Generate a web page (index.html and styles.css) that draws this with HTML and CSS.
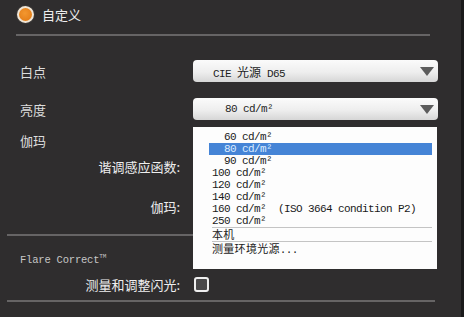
FILE: index.html
```html
<!DOCTYPE html>
<html lang="zh-CN">
<head>
    <meta charset="UTF-8">
    <meta name="viewport" content="width=device-width, initial-scale=1.0">
    <title>白点与亮度</title>
    <link rel="stylesheet" href="styles.css">
</head>
<body>
    <div class="panel">
        <div class="head">
            <span class="radio"></span>
            <span class="head-text">自定义</span>
        </div>
        <div class="rule rule-top"></div>

        <div class="row row-white">
            <span class="lbl">白点</span>
            <div class="select">
                <span class="val">CIE <span class="cjk">光源</span> D65</span>
                <span class="arrow"></span>
            </div>
        </div>

        <div class="row row-lum">
            <span class="lbl">亮度</span>
            <div class="select-wrap">
                <div class="select">
                    <span class="val">  80 cd/m²</span>
                    <span class="arrow"></span>
                </div>
                <!-- liste ouverte -->
                <ul class="menu">
                    <li>  60 cd/m²</li>
                    <li class="active">  80 cd/m²</li>
                    <li>  90 cd/m²</li>
                    <li>100 cd/m²</li>
                    <li>120 cd/m²</li>
                    <li>140 cd/m²</li>
                    <li>160 cd/m²  (ISO 3664 condition P2)</li>
                    <li>250 cd/m²</li>
                    <li class="sep"></li>
                    <li class="cjk-item">本机</li>
                    <li class="sep"></li>
                    <li class="cjk-item">测量环境光源<span class="dots">...</span></li>
                </ul>
            </div>
        </div>

        <div class="row row-gamma">
            <span class="lbl">伽玛</span>
        </div>
        <div class="row row-trc">
            <span class="lbl sub">谐调感应函数:</span>
        </div>
        <div class="row row-gval">
            <span class="lbl sub">伽玛:</span>
        </div>

        <div class="rule rule-wide rule-mid"></div>

        <div class="row row-flare">
            <span class="flare">Flare Correct<sup>TM</sup></span>
        </div>
        <div class="row row-check">
            <span class="lbl sub">测量和调整闪光:</span>
            <span class="checkbox"></span>
        </div>

        <div class="rule rule-wide rule-bottom"></div>
    </div>
</body>
</html>
```

FILE: styles.css
```css
body {
    margin: 0;
    background-color: #2f2d2e;
    font-family: "Noto Sans CJK SC", "Liberation Sans", sans-serif;
    font-size: 13px;
    color: #e2e2e2;
}
.panel {
    width: 461px;
    height: 317px;
    border-right: 3px solid #1b1a1b;
    overflow: hidden;
}
.head {
    height: 28px;
    display: flex;
    align-items: center;
    padding-left: 17px;
}
.radio {
    width: 13px;
    height: 13px;
    border-radius: 50%;
    border: 2px solid #f1e6d6;
    background: radial-gradient(circle at 45% 40%, #f3972f, #e07712);
    box-shadow: 0 0 0 1px #3a3838;
}
.head-text {
    margin-left: 8px;
    font-size: 13px;
    color: #eeeeee;
}
.rule {
    height: 2px;
    background-color: #666465;
}
.rule-top {
    margin: 6px 0 0 16px;
    width: 414px;
}
.rule-wide {
    margin-left: 7px;
    width: 428px;
}
.rule-mid { margin-top: 18px; }
.rule-bottom { margin-top: 6px; }

.row {
    display: flex;
    align-items: center;
}
.lbl {
    width: 160px;
    padding-left: 20px;
    color: #dddddd;
}
.lbl.sub {
    text-align: right;
    color: #eeeeee;
}
.row-white { margin-top: 24px; }
.row-lum { margin-top: 16px; }
.row-gamma { margin-top: 10px; height: 20px; }
.row-trc { margin-top: 6px; height: 20px; }
.row-gval { margin-top: 20px; height: 20px; }
.row-flare { margin-top: 13px; height: 20px; }
.row-check { margin-top: 5px; height: 20px; }

.select-wrap {
    position: relative;
    margin-left: 13px;
}
.select {
    margin-left: 13px;
    width: 245px;
    height: 22px;
    box-sizing: border-box;
    border-radius: 4px;
    background: linear-gradient(#fbfbfb, #eeeeee 55%, #d6d6d6);
    display: flex;
    align-items: center;
    justify-content: space-between;
    padding: 0 4px 0 20px;
}
.select-wrap .select { margin-left: 0; }
.val {
    font-family: "Liberation Mono", "Noto Sans CJK SC", monospace;
    font-size: 11px;
    letter-spacing: -0.6px;
    color: #1e1e1e;
    white-space: pre;
}
.cjk {
    font-family: "Noto Sans CJK SC", sans-serif;
    font-size: 12px;
    letter-spacing: 0;
}
.arrow {
    width: 0;
    height: 0;
    border-left: 7px solid transparent;
    border-right: 7px solid transparent;
    border-top: 9px solid #5c5c5c;
}

.menu {
    position: absolute;
    top: 29px;
    left: 0;
    width: 244px;
    margin: 0;
    padding: 4px 5px 14px 16px;
    box-sizing: border-box;
    list-style: none;
    background-color: #fdfdfd;
    font-family: "Liberation Mono", "Noto Sans CJK SC", monospace;
    font-size: 11px;
    letter-spacing: -0.6px;
    color: #1a1a1a;
    z-index: 2;
}
.menu li {
    height: 12px;
    line-height: 12px;
    padding-left: 3px;
    white-space: pre;
}
.menu li.active {
    background-color: #4584d6;
    color: #dcecff;
}
.menu li.sep {
    height: 1px;
    margin-left: 3px;
    padding: 0;
    background-color: #c4c4c4;
}
.menu li.cjk-item {
    height: 13px;
    line-height: 13px;
    font-family: "Noto Sans CJK SC", sans-serif;
    font-size: 11px;
    letter-spacing: 0.3px;
}
.dots {
    font-family: "Liberation Mono", monospace;
    font-size: 11px;
    letter-spacing: -0.6px;
}

.flare {
    padding-left: 20px;
    font-family: "Liberation Mono", monospace;
    font-size: 10.5px;
    letter-spacing: -0.2px;
    color: #c6c6c6;
}
.flare sup {
    font-size: 6px;
    vertical-align: 5px;
}
.checkbox {
    margin-left: 14px;
    width: 15px;
    height: 15px;
    box-sizing: border-box;
    border: 2px solid #efefef;
    border-radius: 3px;
    background-color: #4a494a;
}
```
